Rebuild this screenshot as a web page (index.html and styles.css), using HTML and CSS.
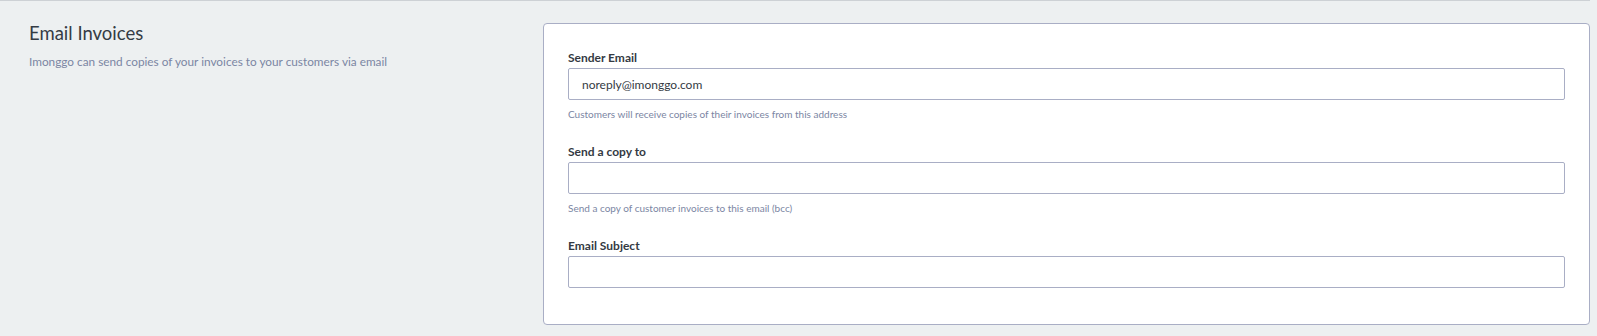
FILE: index.html
```html
<html>
<head>
    <title>Email Invoices - Settings</title>
    <meta name="viewport" content="width=device-width, initial-scale=1.0">
    <link rel="stylesheet" href="styles.css">
</head>
<body>
    <div class="settings-section">
        <div class="intro">
            <h2>Email Invoices</h2>
            <p>Imonggo can send copies of your invoices to your customers via email</p>
        </div>

        <div class="card">
            <div class="field">
                <label for="senderEmail">Sender Email</label>
                <input type="text" id="senderEmail" class="text-input" value="noreply@imonggo.com">
                <div class="help">Customers will receive copies of their invoices from this address</div>
            </div>

            <div class="field">
                <label for="copyTo">Send a copy to</label>
                <input type="text" id="copyTo" class="text-input">
                <div class="help">Send a copy of customer invoices to this email (bcc)</div>
            </div>

            <div class="field">
                <label for="subject">Email Subject</label>
                <input type="text" id="subject" class="text-input">
            </div>
        </div>
    </div>
</body>
</html>
```

FILE: styles.css
```css
body {
    font-family: Lato, "Open Sans", sans-serif;
    margin: 0;
    padding: 0;
    background-color: #edf0f1;
    color: #343a43;
}
.settings-section {
    display: flex;
    align-items: flex-start;
    margin-right: 7px;
    padding-top: 20px;
    border-top: 1px solid #cdd1d5;
}
.intro {
    width: 514px;
    padding-left: 29px;
}
.intro h2 {
    font-size: 18.5px;
    font-weight: normal;
    line-height: 22px;
    margin: 1px 0 0;
    color: #353c45;
}
.intro p {
    font-size: 11.8px;
    line-height: 16px;
    margin: 10px 0 0;
    color: #7b86a3;
}
.card {
    flex: 1;
    margin-top: 2px;
    padding: 26px 24px 36px;
    background: white;
    border: 1px solid #a9aec5;
    border-radius: 4px;
}
.field {
    margin-bottom: 23px;
}
.field:last-child {
    margin-bottom: 0;
}
.field label {
    display: block;
    font-size: 12px;
    font-weight: bold;
    line-height: 16px;
    margin-bottom: 2px;
    color: #343a43;
}
.text-input {
    display: block;
    box-sizing: border-box;
    width: 100%;
    height: 32px;
    padding: 0 13px;
    font-family: Lato, "Open Sans", sans-serif;
    font-size: 12px;
    color: #343a43;
    background: white;
    border: 1px solid #a9aec5;
    border-radius: 2px;
    outline: none;
}
.help {
    margin-top: 7px;
    font-size: 10px;
    line-height: 14px;
    color: #7b86a3;
}
```
